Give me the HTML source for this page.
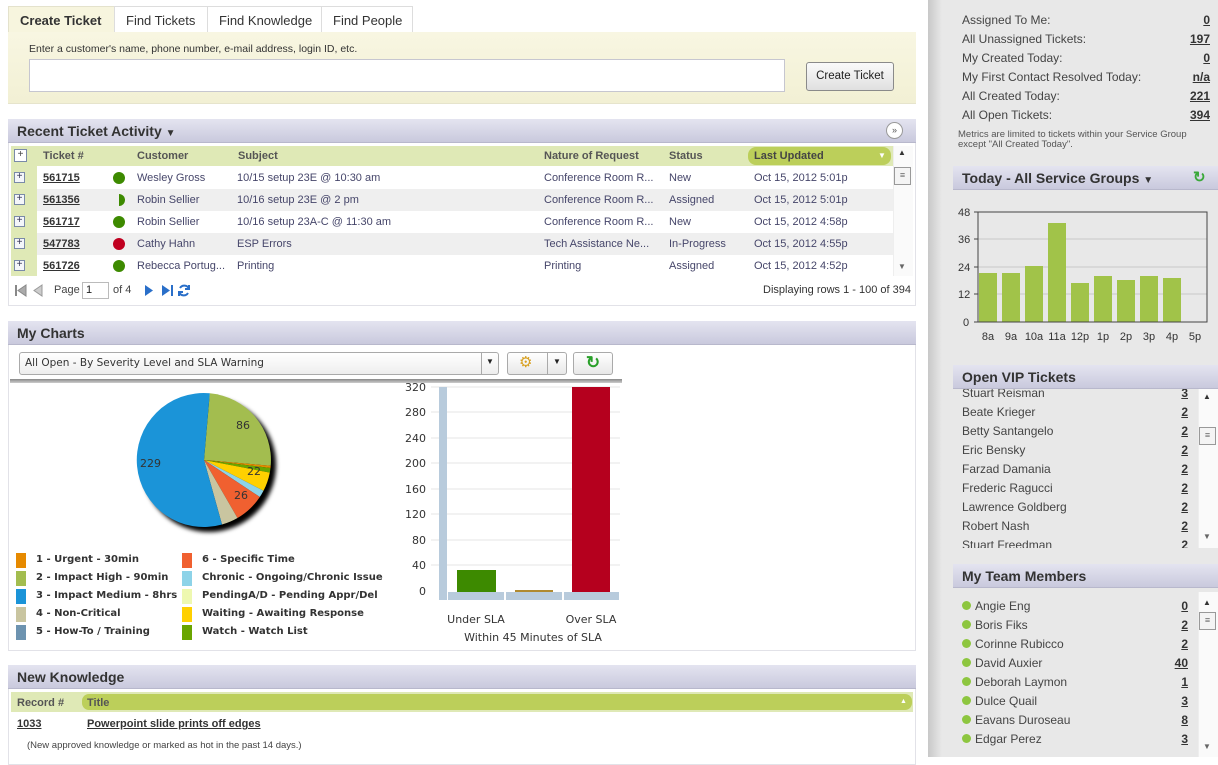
<!DOCTYPE html>
<html><head><meta charset="utf-8"><style>
*{margin:0;padding:0;box-sizing:border-box}
body{width:1218px;height:757px;overflow:hidden;background:#fff;font-family:"Liberation Sans",Arial,sans-serif;font-size:11px;color:#444;position:relative}
.a{position:absolute;white-space:nowrap}
.hdr{position:absolute;height:24px;background:linear-gradient(#e4e4f0,#c9c9dd);border-bottom:1px solid #b8b8cc;font-weight:bold;font-size:14px;color:#333;padding:4px 0 0 9px}
.lnk{text-decoration:underline;font-weight:bold;color:#333}
.tab{position:absolute;top:6px;height:27px;border:1px solid #ddd;border-bottom:none;font-size:13px;color:#333;padding:6px 0 0 11px;background:#fff}
.row{position:absolute;left:37px;width:856px;height:22px}
.tx{color:#46466a}
.dot{position:absolute;width:12px;height:12px;border-radius:6px}
.pl{position:absolute;left:14px;width:11px;height:11px;border:1px solid #7a8aa8;background:#f4f6fa;font-size:10px;line-height:8px;text-align:center;color:#335}
.lg{position:absolute;width:10px;height:15px}
.lt{position:absolute;font-weight:bold;color:#333;font-family:"DejaVu Sans",sans-serif;font-size:10px}
.st{position:absolute;left:962px;font-size:12px;color:#444}
.sv{position:absolute;right:8px;font-size:12px;font-weight:bold;text-decoration:underline;color:#333}
.vn{position:absolute;left:962px;font-size:12px;color:#444}
.vc{position:absolute;right:30px;font-size:12px;font-weight:bold;text-decoration:underline;color:#333}
.sb{position:absolute;width:20px;background:#fafafa;border-left:1px solid #eee}
</style></head><body>

<!-- Tabs -->
<div class="tab" style="left:8px;width:107px;background:#f7f5de;font-weight:bold;border-color:#e4e2cc">Create Ticket</div>
<div class="tab" style="left:114px;width:94px">Find Tickets</div>
<div class="tab" style="left:207px;width:115px">Find Knowledge</div>
<div class="tab" style="left:321px;width:92px">Find People</div>
<div class="a" style="left:8px;top:32px;width:908px;height:72px;background:linear-gradient(#f8f6e2,#f2f0d4);border-bottom:1px solid #e6e4cc"></div>
<div class="a" style="left:29px;top:43px;font-size:10.5px;color:#333">Enter a customer's name, phone number, e-mail address, login ID, etc.</div>
<div class="a" style="left:29px;top:59px;width:756px;height:33px;background:#fff;border:1px solid #c6c6d0"></div>
<div class="a" style="left:806px;top:62px;width:88px;height:29px;border:1px solid #8a8a8a;border-radius:3px;background:linear-gradient(#fafafa,#e0e0e0);font-size:11.5px;color:#222;text-align:center;line-height:27px">Create Ticket</div>

<!-- Recent Ticket Activity -->
<div class="a" style="left:8px;top:119px;width:908px;height:187px;border:1px solid #e2e2e8"></div>
<div class="hdr" style="left:8px;top:119px;width:908px">Recent Ticket Activity <span style="font-size:10px">&#9660;</span></div>
<div class="a" style="left:886px;top:122px;width:17px;height:17px;border-radius:9px;border:1px solid #999;background:#fff;font-size:9px;text-align:center;line-height:14px;color:#555">&#187;</div>
<div class="a" style="left:11px;top:146px;width:882px;height:20px;background:#dfe9b6"></div>
<div class="a" style="left:11px;top:146px;width:26px;height:130px;background:#dfe9b6"></div>
<div class="a" style="left:14px;top:149px;width:13px;height:13px;border:1px solid #7a8aa8;background:#fff;font-size:10px;line-height:10px;text-align:center">+</div>
<div class="a" style="left:748px;top:147px;width:143px;height:18px;background:#bccf5a;border-radius:8px"></div>
<div class="a" style="left:878px;top:151px;color:#fff;font-size:8px">&#9660;</div>
<div class="a" style="left:43px;top:150px;font-weight:bold;color:#555">Ticket #</div>
<div class="a" style="left:137px;top:150px;font-weight:bold;color:#555">Customer</div>
<div class="a" style="left:238px;top:150px;font-weight:bold;color:#555">Subject</div>
<div class="a" style="left:544px;top:150px;font-weight:bold;color:#555">Nature of Request</div>
<div class="a" style="left:669px;top:150px;font-weight:bold;color:#555">Status</div>
<div class="a" style="left:754px;top:150px;font-weight:bold;color:#444">Last Updated</div>

<div class="row" style="top:189px;background:#efefef"></div>
<div class="row" style="top:233px;background:#efefef"></div>

<div class="pl" style="top:172px">+</div><div class="pl" style="top:194px">+</div><div class="pl" style="top:216px">+</div><div class="pl" style="top:238px">+</div><div class="pl" style="top:260px">+</div>

<div class="a lnk" style="left:43px;top:172px">561715</div>
<div class="dot" style="left:113px;top:172px;background:#3d8a00"></div>
<div class="a tx" style="left:137px;top:172px">Wesley Gross</div>
<div class="a tx" style="left:237px;top:172px">10/15 setup 23E @ 10:30 am</div>
<div class="a tx" style="left:544px;top:172px">Conference Room R...</div>
<div class="a tx" style="left:669px;top:172px">New</div>
<div class="a tx" style="left:754px;top:172px">Oct 15, 2012 5:01p</div>

<div class="a lnk" style="left:43px;top:194px">561356</div>
<div class="dot" style="left:113px;top:194px;background:#3d8a00;clip-path:inset(0 0 0 50%)"></div>
<div class="a tx" style="left:137px;top:194px">Robin Sellier</div>
<div class="a tx" style="left:237px;top:194px">10/16 setup 23E @ 2 pm</div>
<div class="a tx" style="left:544px;top:194px">Conference Room R...</div>
<div class="a tx" style="left:669px;top:194px">Assigned</div>
<div class="a tx" style="left:754px;top:194px">Oct 15, 2012 5:01p</div>

<div class="a lnk" style="left:43px;top:216px">561717</div>
<div class="dot" style="left:113px;top:216px;background:#3d8a00"></div>
<div class="a tx" style="left:137px;top:216px">Robin Sellier</div>
<div class="a tx" style="left:237px;top:216px">10/16 setup 23A-C @ 11:30 am</div>
<div class="a tx" style="left:544px;top:216px">Conference Room R...</div>
<div class="a tx" style="left:669px;top:216px">New</div>
<div class="a tx" style="left:754px;top:216px">Oct 15, 2012 4:58p</div>

<div class="a lnk" style="left:43px;top:238px">547783</div>
<div class="dot" style="left:113px;top:238px;background:#c00020"></div>
<div class="a tx" style="left:137px;top:238px">Cathy Hahn</div>
<div class="a tx" style="left:237px;top:238px">ESP Errors</div>
<div class="a tx" style="left:544px;top:238px">Tech Assistance Ne...</div>
<div class="a tx" style="left:669px;top:238px">In-Progress</div>
<div class="a tx" style="left:754px;top:238px">Oct 15, 2012 4:55p</div>

<div class="a lnk" style="left:43px;top:260px">561726</div>
<div class="dot" style="left:113px;top:260px;background:#3d8a00"></div>
<div class="a tx" style="left:137px;top:260px">Rebecca Portug...</div>
<div class="a tx" style="left:237px;top:260px">Printing</div>
<div class="a tx" style="left:544px;top:260px">Printing</div>
<div class="a tx" style="left:669px;top:260px">Assigned</div>
<div class="a tx" style="left:754px;top:260px">Oct 15, 2012 4:52p</div>

<div class="sb" style="left:893px;top:146px;height:130px"></div>
<div class="a" style="left:898px;top:148px;font-size:8px;color:#333">&#9650;</div>
<div class="a" style="left:894px;top:167px;width:17px;height:18px;border:1px solid #999;background:#f4f4f4;font-size:9px;text-align:center;line-height:15px;color:#666">&#8801;</div>
<div class="a" style="left:898px;top:262px;font-size:8px;color:#666">&#9660;</div>

<svg class="a" style="left:14px;top:284px" width="180" height="14">
<rect x="1" y="1" width="2" height="11" fill="#888"/><path d="M12 1 L4 6.5 L12 12 Z" fill="#aaa" stroke="#888"/>
<path d="M28 1 L20 6.5 L28 12 Z" fill="#ccc" stroke="#999"/>
<path d="M131 1 L139 6.5 L131 12 Z" fill="#2a6fc9"/>
<path d="M148 1 L156 6.5 L148 12 Z" fill="#2a6fc9"/><rect x="157" y="1" width="2" height="11" fill="#2a6fc9"/>
<path d="M166 4 A5 5 0 0 1 175 5 M175 1 L175 5 L171 5 M174 9 A5 5 0 0 1 165 8 M165 12 L165 8 L169 8" stroke="#2a6fc9" stroke-width="2" fill="none"/>
</svg>
<div class="a" style="left:54px;top:284px;color:#444">Page</div>
<div class="a" style="left:82px;top:282px;width:27px;height:17px;border:1px solid #bbb;padding:1px 3px;color:#222">1</div>
<div class="a" style="left:113px;top:284px;color:#444">of 4</div>
<div class="a" style="right:307px;top:284px;color:#333">Displaying rows 1 - 100 of 394</div>

<!-- My Charts -->
<div class="a" style="left:8px;top:321px;width:908px;height:330px;border:1px solid #e2e2e8"></div>
<div class="hdr" style="left:8px;top:321px;width:908px">My Charts</div>
<div class="a" style="left:19px;top:352px;width:480px;height:23px;border:1px solid #aaa;border-radius:3px;background:linear-gradient(#fff,#eee);font-family:'DejaVu Sans',sans-serif;font-size:10.5px;color:#333;padding:4px 5px">All Open - By Severity Level and SLA Warning</div>
<div class="a" style="left:481px;top:353px;width:1px;height:21px;background:#aaa"></div>
<div class="a" style="left:486px;top:357px;font-size:8px;color:#222">&#9660;</div>
<div class="a" style="left:507px;top:352px;width:60px;height:23px;border:1px solid #aaa;border-radius:3px;background:linear-gradient(#fff,#e8e8e8)"></div>
<div class="a" style="left:547px;top:353px;width:1px;height:21px;background:#aaa"></div>
<div class="a" style="left:519px;top:353px;font-size:15px;color:#d8a020">&#9881;</div>
<div class="a" style="left:553px;top:357px;font-size:8px;color:#222">&#9660;</div>
<div class="a" style="left:573px;top:352px;width:40px;height:23px;border:1px solid #aaa;border-radius:3px;background:linear-gradient(#fff,#e8e8e8);text-align:center;color:#2aa02a;font-size:17px;font-weight:bold;line-height:20px">&#8635;</div>
<div class="a" style="left:10px;top:379px;width:612px;height:4px;background:linear-gradient(#888,#ccc)"></div>

<svg class="a" style="left:0;top:380px" width="930" height="270">
<defs><filter id="bl"><feGaussianBlur stdDeviation="2"/></filter></defs>
<circle cx="209" cy="85" r="67" fill="#000" filter="url(#bl)"/>
<g transform="translate(204,80)">
<path d="M0 0 L5.8 -66.7 A67 67 0 0 1 66.7 5.8 Z" fill="#a3bd4f"/>
<path d="M0 0 L66.7 5.8 A67 67 0 0 1 66.5 8 Z" fill="#e68a00"/>
<path d="M0 0 L66.5 8 A67 67 0 0 1 65.8 12.6 Z" fill="#6aa500"/>
<path d="M0 0 L65.8 12.6 A67 67 0 0 1 59.5 30.8 Z" fill="#ffd000"/>
<path d="M0 0 L59.5 30.8 A67 67 0 0 1 55.8 37 Z" fill="#8dd3e8"/>
<path d="M0 0 L55.8 37 A67 67 0 0 1 33.5 58 Z" fill="#f06030"/>
<path d="M0 0 L33.5 58 A67 67 0 0 1 18 64.5 Z" fill="#c9c5a0"/>
<path d="M0 0 L18 64.5 A67 67 0 1 1 5.8 -66.7 Z" fill="#1b94d8"/>
</g>
<g font-family="DejaVu Sans,sans-serif" font-size="11" fill="#333">
<text x="236" y="49">86</text><text x="140" y="87">229</text><text x="247" y="95">22</text><text x="234" y="119">26</text>
</g>
<g font-family="DejaVu Sans,sans-serif" font-size="11" fill="#333" text-anchor="end">
<text x="426" y="11">320</text><text x="426" y="36">280</text><text x="426" y="62">240</text><text x="426" y="87">200</text><text x="426" y="113">160</text><text x="426" y="138">120</text><text x="426" y="164">80</text><text x="426" y="189">40</text><text x="426" y="215">0</text>
</g>
<g stroke="#e6e6e6"><line x1="431" y1="7" x2="620" y2="7"/><line x1="431" y1="32" x2="620" y2="32"/><line x1="431" y1="58" x2="620" y2="58"/><line x1="431" y1="83" x2="620" y2="83"/><line x1="431" y1="109" x2="620" y2="109"/><line x1="431" y1="134" x2="620" y2="134"/><line x1="431" y1="160" x2="620" y2="160"/><line x1="431" y1="185" x2="620" y2="185"/></g>
<rect x="439" y="7" width="8" height="213" fill="#b8cbdc"/>
<rect x="448" y="212" width="56" height="8" fill="#b8cbdc"/><rect x="506" y="212" width="56" height="8" fill="#b8cbdc"/><rect x="564" y="212" width="55" height="8" fill="#b8cbdc"/>
<rect x="457" y="190" width="39" height="22" fill="#3d8a00"/>
<rect x="515" y="210" width="38" height="2" fill="#b08a30"/>
<rect x="572" y="7" width="38" height="205" fill="#b5001e"/>
<g font-family="DejaVu Sans,sans-serif" font-size="11" fill="#333" text-anchor="middle">
<text x="476" y="243">Under SLA</text><text x="591" y="243">Over SLA</text><text x="533" y="261">Within 45 Minutes of SLA</text></g>
</svg>

<div class="lg" style="left:16px;top:553px;background:#e68a00"></div><div class="lt" style="left:36px;top:554px">1 - Urgent - 30min</div>
<div class="lg" style="left:16px;top:571px;background:#a3bd4f"></div><div class="lt" style="left:36px;top:572px">2 - Impact High - 90min</div>
<div class="lg" style="left:16px;top:589px;background:#1b94d8"></div><div class="lt" style="left:36px;top:590px">3 - Impact Medium - 8hrs</div>
<div class="lg" style="left:16px;top:607px;background:#c9c5a0"></div><div class="lt" style="left:36px;top:608px">4 - Non-Critical</div>
<div class="lg" style="left:16px;top:625px;background:#6d93b0"></div><div class="lt" style="left:36px;top:626px">5 - How-To / Training</div>
<div class="lg" style="left:182px;top:553px;background:#f06030"></div><div class="lt" style="left:202px;top:554px">6 - Specific Time</div>
<div class="lg" style="left:182px;top:571px;background:#8dd3e8"></div><div class="lt" style="left:202px;top:572px">Chronic - Ongoing/Chronic Issue</div>
<div class="lg" style="left:182px;top:589px;background:#eef8b0"></div><div class="lt" style="left:202px;top:590px">PendingA/D - Pending Appr/Del</div>
<div class="lg" style="left:182px;top:607px;background:#ffd000"></div><div class="lt" style="left:202px;top:608px">Waiting - Awaiting Response</div>
<div class="lg" style="left:182px;top:625px;background:#6aa500"></div><div class="lt" style="left:202px;top:626px">Watch - Watch List</div>

<!-- New Knowledge -->
<div class="a" style="left:8px;top:665px;width:908px;height:100px;border:1px solid #e2e2e8"></div>
<div class="hdr" style="left:8px;top:665px;width:908px">New Knowledge</div>
<div class="a" style="left:11px;top:692px;width:902px;height:20px;background:#dfe9b6"></div>
<div class="a" style="left:82px;top:694px;width:830px;height:16px;background:#bccf5a;border-radius:7px"></div>
<div class="a" style="left:17px;top:697px;font-weight:bold;color:#555">Record #</div>
<div class="a" style="left:87px;top:697px;font-weight:bold;color:#555">Title</div>
<div class="a" style="left:900px;top:698px;color:#fff;font-size:7px">&#9650;</div>
<div class="a lnk" style="left:17px;top:718px">1033</div>
<div class="a lnk" style="left:87px;top:718px">Powerpoint slide prints off edges</div>
<div class="a" style="left:27px;top:740px;font-size:9.5px;color:#444">(New approved knowledge or marked as hot in the past 14 days.)</div>

<!-- Sidebar -->
<div class="a" style="left:928px;top:0;width:290px;height:757px;background:#e8e8e8"></div>
<div class="a" style="left:928px;top:0;width:14px;height:757px;background:linear-gradient(90deg,#c8c8c8,#e8e8e8)"></div>
<div class="st" style="top:13px">Assigned To Me:</div><div class="sv" style="top:13px">0</div>
<div class="st" style="top:32px">All Unassigned Tickets:</div><div class="sv" style="top:32px">197</div>
<div class="st" style="top:51px">My Created Today:</div><div class="sv" style="top:51px">0</div>
<div class="st" style="top:70px">My First Contact Resolved Today:</div><div class="sv" style="top:70px">n/a</div>
<div class="st" style="top:89px">All Created Today:</div><div class="sv" style="top:89px">221</div>
<div class="st" style="top:108px">All Open Tickets:</div><div class="sv" style="top:108px">394</div>
<div class="a" style="left:958px;top:130px;font-size:9.5px;line-height:10px;color:#555">Metrics are limited to tickets within your Service Group<br>except "All Created Today".</div>

<div class="hdr" style="left:953px;top:166px;width:265px">Today - All Service Groups <span style="font-size:10px">&#9660;</span></div>
<div class="a" style="left:1193px;top:168px;color:#3aa83a;font-size:15px;font-weight:bold">&#8635;</div>
<svg class="a" style="left:953px;top:200px" width="265" height="150">
<g font-family="Liberation Sans,sans-serif" font-size="11" fill="#333">
<text x="5" y="16">48</text><text x="5" y="43">36</text><text x="5" y="71">24</text><text x="5" y="98">12</text><text x="10" y="126">0</text>
</g>
<g stroke="#c8c8c8"><line x1="25" y1="39" x2="254" y2="39"/><line x1="25" y1="67" x2="254" y2="67"/><line x1="25" y1="94" x2="254" y2="94"/></g>
<g fill="#a1c349">
<rect x="26" y="73" width="18" height="49"/><rect x="49" y="73" width="18" height="49"/><rect x="72" y="66" width="18" height="56"/><rect x="95" y="23" width="18" height="99"/><rect x="118" y="83" width="18" height="39"/><rect x="141" y="76" width="18" height="46"/><rect x="164" y="80" width="18" height="42"/><rect x="187" y="76" width="18" height="46"/><rect x="210" y="78" width="18" height="44"/>
</g>
<rect x="25" y="12" width="229" height="110" fill="none" stroke="#444"/>
<g stroke="#444"><line x1="21" y1="12" x2="25" y2="12"/><line x1="21" y1="39" x2="25" y2="39"/><line x1="21" y1="67" x2="25" y2="67"/><line x1="21" y1="94" x2="25" y2="94"/><line x1="21" y1="122" x2="25" y2="122"/></g>
<g font-family="Liberation Sans,sans-serif" font-size="11" fill="#333" text-anchor="middle">
<text x="35" y="140">8a</text><text x="58" y="140">9a</text><text x="81" y="140">10a</text><text x="104" y="140">11a</text><text x="127" y="140">12p</text><text x="150" y="140">1p</text><text x="173" y="140">2p</text><text x="196" y="140">3p</text><text x="219" y="140">4p</text><text x="242" y="140">5p</text>
</g>
</svg>

<div class="a" style="left:953px;top:389px;width:265px;height:159px;overflow:hidden">
<div class="vn" style="left:9px;top:-3px">Stuart Reisman</div><div class="vc" style="top:-3px">3</div>
<div class="vn" style="left:9px;top:16px">Beate Krieger</div><div class="vc" style="top:16px">2</div>
<div class="vn" style="left:9px;top:35px">Betty Santangelo</div><div class="vc" style="top:35px">2</div>
<div class="vn" style="left:9px;top:54px">Eric Bensky</div><div class="vc" style="top:54px">2</div>
<div class="vn" style="left:9px;top:73px">Farzad Damania</div><div class="vc" style="top:73px">2</div>
<div class="vn" style="left:9px;top:92px">Frederic Ragucci</div><div class="vc" style="top:92px">2</div>
<div class="vn" style="left:9px;top:111px">Lawrence Goldberg</div><div class="vc" style="top:111px">2</div>
<div class="vn" style="left:9px;top:130px">Robert Nash</div><div class="vc" style="top:130px">2</div>
<div class="vn" style="left:9px;top:149px">Stuart Freedman</div><div class="vc" style="top:149px">2</div>
<div class="sb" style="left:245px;top:0;height:159px"></div>
<div class="a" style="left:250px;top:3px;font-size:8px;color:#333">&#9650;</div>
<div class="a" style="left:246px;top:38px;width:17px;height:18px;border:1px solid #999;background:#f4f4f4;font-size:9px;text-align:center;line-height:15px;color:#666">&#8801;</div>
<div class="a" style="left:250px;top:143px;font-size:8px;color:#666">&#9660;</div>
</div>
<div class="hdr" style="left:953px;top:365px;width:265px">Open VIP Tickets</div>

<div class="hdr" style="left:953px;top:564px;width:265px">My Team Members</div>
<div class="a" style="left:953px;top:592px;width:265px;height:165px">
<div class="sb" style="left:245px;top:0;height:165px"></div>
<div class="a" style="left:250px;top:6px;font-size:8px;color:#333">&#9650;</div>
<div class="a" style="left:246px;top:20px;width:17px;height:18px;border:1px solid #999;background:#f4f4f4;font-size:9px;text-align:center;line-height:15px;color:#666">&#8801;</div>
<div class="a" style="left:250px;top:150px;font-size:8px;color:#666">&#9660;</div>
</div>
<div class="a" style="left:962px;top:597px;font-size:12px;line-height:19px;color:#444">
<div><span style="display:inline-block;width:9px;height:9px;border-radius:5px;background:#8dc63f;margin-right:4px"></span>Angie Eng</div>
<div><span style="display:inline-block;width:9px;height:9px;border-radius:5px;background:#8dc63f;margin-right:4px"></span>Boris Fiks</div>
<div><span style="display:inline-block;width:9px;height:9px;border-radius:5px;background:#8dc63f;margin-right:4px"></span>Corinne Rubicco</div>
<div><span style="display:inline-block;width:9px;height:9px;border-radius:5px;background:#8dc63f;margin-right:4px"></span>David Auxier</div>
<div><span style="display:inline-block;width:9px;height:9px;border-radius:5px;background:#8dc63f;margin-right:4px"></span>Deborah Laymon</div>
<div><span style="display:inline-block;width:9px;height:9px;border-radius:5px;background:#8dc63f;margin-right:4px"></span>Dulce Quail</div>
<div><span style="display:inline-block;width:9px;height:9px;border-radius:5px;background:#8dc63f;margin-right:4px"></span>Eavans Duroseau</div>
<div><span style="display:inline-block;width:9px;height:9px;border-radius:5px;background:#8dc63f;margin-right:4px"></span>Edgar Perez</div>
</div>
<div class="a" style="right:30px;top:597px;font-size:12px;line-height:19px;font-weight:bold;text-align:right;color:#333;text-decoration:underline">
<div>0</div><div>2</div><div>2</div><div>40</div><div>1</div><div>3</div><div>8</div><div>3</div>
</div>
</body></html>
